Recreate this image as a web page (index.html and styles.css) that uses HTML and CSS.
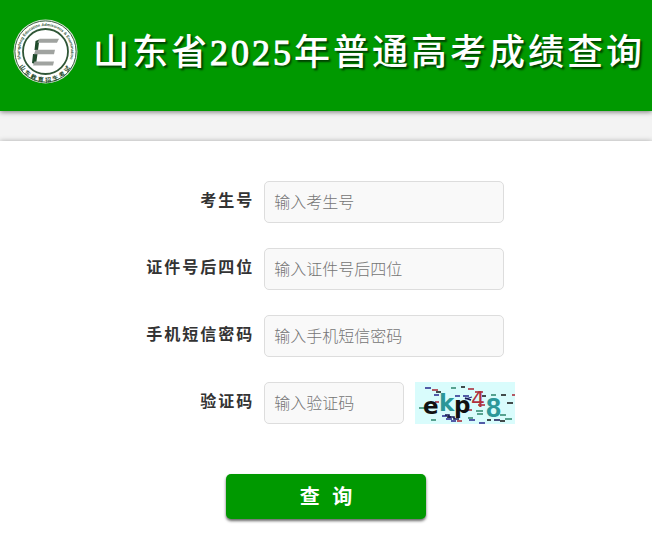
FILE: index.html
```html
<!DOCTYPE html>
<html lang="zh-CN">
<head>
<meta charset="utf-8">
<meta name="viewport" content="width=device-width, initial-scale=1">
<title>山东省2025年普通高考成绩查询</title>
<link rel="stylesheet" href="styles.css">
</head>
<body>
<header class="header">
  <svg class="logo" viewBox="0 0 65 65" aria-hidden="true">
    <defs>
      <path id="arc-top" d="M8.700 42 A25.600 25.600 0 1 1 56.300 42"/>
      <path id="arc-bottom" d="M3.500 38 A29.300 29.300 0 0 0 61.500 38"/>
    </defs>
    <circle cx="32.500" cy="32.500" r="32" fill="#d9e2d7"/>
    <circle cx="32.500" cy="32.500" r="30.600" fill="#fff" stroke="#3f6545" stroke-width="1"/>
    <circle cx="32.500" cy="32.500" r="22.500" fill="#fff" stroke="#2f5636" stroke-width="1.800"/>
    <text class="logo-latin"><textPath href="#arc-top" startOffset="50%" text-anchor="middle">Shangdong Education Admissions &amp; Examination</textPath></text>
    <text class="logo-han"><textPath href="#arc-bottom" startOffset="50%" text-anchor="middle">山东教育招生考试</textPath></text>
    <path d="M22.500 22 L26 20.500 V23.500 L25 31 H21.500 Z M20 35 H24.500 L23 45.500 L19 44 Z" fill="#1f4a2b"/>
    <path d="M26.500 19.700 H46 L44 23.700 H24.500 Z M22.500 30.800 H42 L41 35.200 H21 Z M21.500 42.500 H41 L40 46.500 H20 Z" fill="#a0a3a0"/>
  </svg>
  <h1 class="title">山东省<span class="year">2025</span>年普通高考成绩查询</h1>
</header>
<main class="panel">
  <form class="form">
    <div class="row">
      <label class="label" for="candidate">考生号</label>
      <input class="field" id="candidate" type="text" placeholder="输入考生号">
    </div>
    <div class="row">
      <label class="label" for="idcard">证件号后四位</label>
      <input class="field" id="idcard" type="text" placeholder="输入证件号后四位">
    </div>
    <div class="row">
      <label class="label" for="sms">手机短信密码</label>
      <input class="field" id="sms" type="text" placeholder="输入手机短信密码">
    </div>
    <div class="row">
      <label class="label" for="captcha">验证码</label>
      <div class="captcha">
        <input class="field field-short" id="captcha" type="text" placeholder="输入验证码">
        <svg class="captcha-image" viewBox="0 0 100 42" aria-hidden="true">
          <rect width="100" height="42" fill="#d9fcfc"/>
          <g stroke-width="1.300" fill="none">
            <path stroke="#26268a" d="M10 6h6 M40 14h5 M48 14h6 M27 34h5 M31 37h6 M36 39h5 M64 41h6 M50 17l7 -2 M19 13h5 M54 38h6"/>
            <path stroke="#a82332" d="M17 8h6 M53 7h6 M60 10h8 M63 23h7 M42 39h5 M97 13h3 M52 28h5 M20 20h4"/>
            <path stroke="#111" d="M21 10h5 M86 13h5 M92 21h6 M72 38h4 M85 39h5 M46 5h4 M32 35h4 M67 14h4"/>
            <path stroke="#2d846b" d="M4 26h7 M16 38h5 M36 6h5 M61 29h7 M62 32h6 M76 13h5 M85 33h6 M90 37h7 M53 36h5"/>
          </g>
          <text class="glyph glyph-dark" x="8" y="32">e</text>
          <text class="glyph glyph-teal" x="24" y="29">k</text>
          <text class="glyph glyph-dark" x="39" y="31">p</text>
          <text class="glyph glyph-red" x="56" y="25">4</text>
          <text class="glyph glyph-teal glyph-large" x="71" y="35">8</text>
          <path d="M30 33h4v2h5v2h5 M50 16l6 2 M79 38h6" stroke="#151550" stroke-width="1.600" fill="none"/>
        </svg>
      </div>
    </div>
    <button class="submit" type="submit">查 询</button>
  </form>
</main>
</body>
</html>
```
FILE: styles.css
```css
* {
  box-sizing: border-box;
}

body {
  margin: 0;
  min-height: 100vh;
  display: flex;
  flex-direction: column;
  background: #f3f3f3;
  color: #333;
  font-family: "Liberation Serif", "Noto Sans CJK SC", serif;
  font-size: 16px;
}

.header {
  display: flex;
  align-items: center;
  gap: 15px;
  padding: 19px 13px 27px;
  background: #009900;
  box-shadow: 0 1px 5px rgba(0, 0, 0, 0.5);
}

.logo {
  flex: none;
  width: 65px;
  height: 65px;
}

.logo-latin {
  font: bold 4px "Liberation Sans", sans-serif;
  fill: #2f5636;
}

.logo-han {
  font: bold 6px "Noto Sans CJK SC", sans-serif;
  letter-spacing: 2px;
  fill: #1f4a2b;
}

.title {
  margin: 0;
  padding-top: 2px;
  color: #fff;
  font-size: 36px;
  font-weight: 500;
  line-height: 62px;
  letter-spacing: 3px;
  white-space: nowrap;
  text-shadow: 2px 2px 2px rgba(0, 0, 0, 0.6);
}

.year {
  -webkit-text-stroke: 1px #fff;
}

.panel {
  flex: 1;
  margin-top: 30px;
  padding: 40px 0;
  background: #fff;
  box-shadow: 0 0 5px rgba(0, 0, 0, 0.3);
}

.form {
  display: grid;
  gap: 25px;
}

.row {
  display: grid;
  grid-template-columns: 39% 1fr;
  column-gap: 10px;
}

.label {
  text-align: right;
  font-weight: bold;
  line-height: 40px;
  letter-spacing: 2px;
}

.field {
  width: 240px;
  height: 42px;
  padding: 0 9px 2px;
  border: 1px solid #ddd;
  border-radius: 5px;
  background: #f9f9f9;
  color: #333;
  font: 16px "Noto Sans CJK SC", sans-serif;
}

.field::placeholder {
  color: #757575;
  font-weight: 300;
  opacity: 1;
}

.captcha {
  display: flex;
  gap: 11px;
}

.field-short {
  width: 140px;
}

.captcha-image {
  width: 100px;
  height: 42px;
}

.glyph {
  font: bold 23px "DejaVu Sans", sans-serif;
}

.glyph-dark {
  fill: #111;
}

.glyph-teal {
  fill: #2c9798;
  font-size: 23px;
}

.glyph-large {
  font: bold 27px "Liberation Sans", sans-serif;
}

.glyph-red {
  fill: #b0303c;
  font-size: 22px;
  font-weight: normal;
}

.submit {
  justify-self: center;
  width: 200px;
  height: 45px;
  margin-top: 25px;
  padding: 0 0 2px 4px;
  border: 0;
  border-radius: 5px;
  background: #009900;
  box-shadow: 0 2px 3px rgba(0, 0, 0, 0.6);
  color: #fff;
  font: bold 20px "Noto Sans CJK SC", sans-serif;
  letter-spacing: 4px;
}
```
